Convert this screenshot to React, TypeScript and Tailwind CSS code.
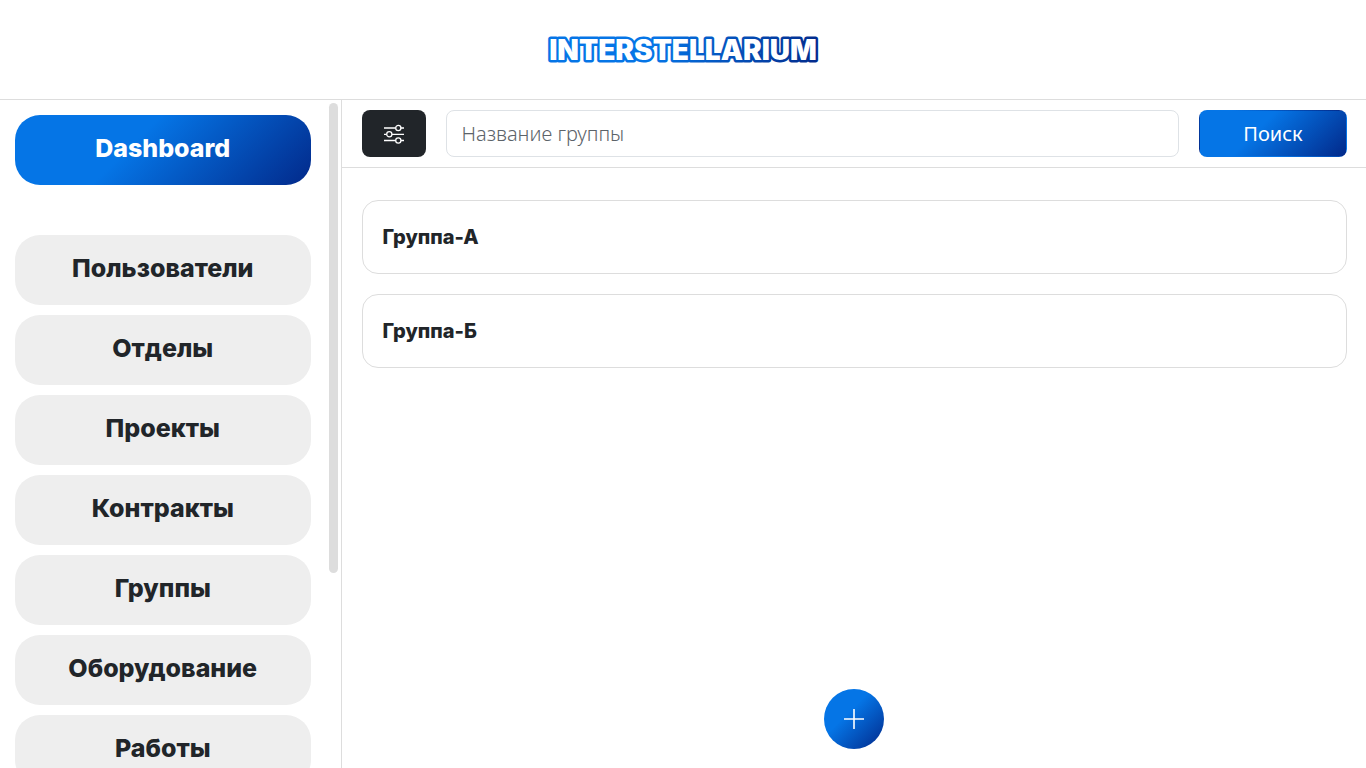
import React from "react";

const sections = [
  "Пользователи",
  "Отделы",
  "Проекты",
  "Контракты",
  "Группы",
  "Оборудование",
  "Работы",
];

const groups = ["Группа-А", "Группа-Б"];

function Logo() {
  return (
    <svg width="300" height="48" viewBox="0 0 300 48" role="img" aria-label="Interstellarium">
      <defs>
        <linearGradient id="logo" gradientUnits="userSpaceOnUse" x1="12" y1="0" x2="288" y2="32">
          <stop offset="0.4" stopColor="#0575e6" />
          <stop offset="1" stopColor="#02298a" />
        </linearGradient>
      </defs>
      <g
        fontFamily="Inter, 'Liberation Sans', sans-serif"
        fontWeight="900"
        fontSize="28"
        textAnchor="middle"
        strokeLinejoin="round"
      >
        <text
          x="150"
          y="34"
          fill="#ffffff"
          stroke="url(#logo)"
          strokeWidth="5"
          paintOrder="stroke"
        >
          INTERSTELLARIUM
        </text>
      </g>
    </svg>
  );
}

function FilterIcon() {
  return (
    <svg
      width="20"
      height="20"
      viewBox="0 0 20 20"
      fill="none"
      stroke="currentColor"
      strokeWidth="1.3"
      aria-hidden="true"
    >
      <path d="M0 4h11.5M17 4h3M0 10.3h2.5M8 10.3h12M0 16.5h11.5M17 16.5h3" />
      <circle cx="14.3" cy="4" r="2.6" />
      <circle cx="5.3" cy="10.3" r="2.6" />
      <circle cx="14.3" cy="16.5" r="2.6" />
    </svg>
  );
}

export default function App() {
  return (
    <div className="flex h-screen flex-col overflow-hidden bg-white font-['Inter','Liberation_Sans',sans-serif] text-[#212529]">
      <header className="flex h-[100px] shrink-0 items-center justify-center border-b border-[#dddddd]">
        <a href="#home">
          <Logo />
        </a>
      </header>
      <div className="flex min-h-0 flex-1">
        <aside className="flex w-1/4 shrink-0 border-r border-[#dddddd]">
          <nav className="flex min-w-0 flex-1 flex-col gap-2.5 overflow-hidden py-[15px] pl-[15px] text-center text-[25px] font-extrabold">
            <a
              href="#dashboard"
              className="mb-10 flex h-[70px] shrink-0 items-center justify-center rounded-[25px] bg-[linear-gradient(135deg,#0575e6_40%,#02298a)] pb-0.5 text-white"
            >
              Dashboard
            </a>
            {sections.map((name) => (
              <a
                key={name}
                href="#section"
                className="flex h-[70px] shrink-0 items-center justify-center rounded-[25px] bg-[#eeeeee] pb-0.5"
              >
                {name}
              </a>
            ))}
          </nav>
          <div className="w-[30px] shrink-0 py-[3px] pr-[3px] pl-[18px]">
            <div className="h-[71%] rounded-full bg-[#dddddd]" />
          </div>
        </aside>
        <main className="relative min-w-0 flex-1">
          <form className="flex gap-5 border-b border-[#dddddd] py-2.5 pr-[19px] pl-5 font-['Noto_Sans','Open_Sans',sans-serif] text-xl font-light">
            <button
              type="button"
              aria-label="Фильтры"
              className="flex h-[47px] w-16 items-center justify-center rounded-lg bg-[#212529] text-white"
            >
              <FilterIcon />
            </button>
            <input
              type="text"
              aria-label="Название группы"
              placeholder="Название группы"
              className="h-[47px] min-w-0 flex-1 rounded-lg border border-[#dee2e6] px-[15px] placeholder:text-[#5c6369]"
            />
            <button
              type="button"
              className="h-[47px] w-[148px] rounded-lg border border-transparent bg-[linear-gradient(135deg,#0575e6_40%,#02298a)] font-normal text-white"
            >
              Поиск
            </button>
          </form>
          <ul className="flex flex-col gap-5 pt-8 pr-[19px] pl-5">
            {groups.map((name) => (
              <li key={name}>
                <a
                  href="#group"
                  className="flex h-[74px] items-center rounded-2xl border border-[#dddddd] px-5 text-xl font-extrabold"
                >
                  {name}
                </a>
              </li>
            ))}
          </ul>
          <button
            type="button"
            aria-label="Добавить группу"
            className="absolute bottom-[19px] left-1/2 flex size-[60px] -translate-x-1/2 items-center justify-center rounded-full bg-[linear-gradient(135deg,#0575e6_40%,#02298a)] text-white"
          >
            <svg width="20" height="20" viewBox="0 0 20 20" stroke="currentColor" strokeWidth="1.6" strokeLinecap="round" aria-hidden="true">
              <path d="M10 0.5v19M0.5 10h19" />
            </svg>
          </button>
        </main>
      </div>
    </div>
  );
}
